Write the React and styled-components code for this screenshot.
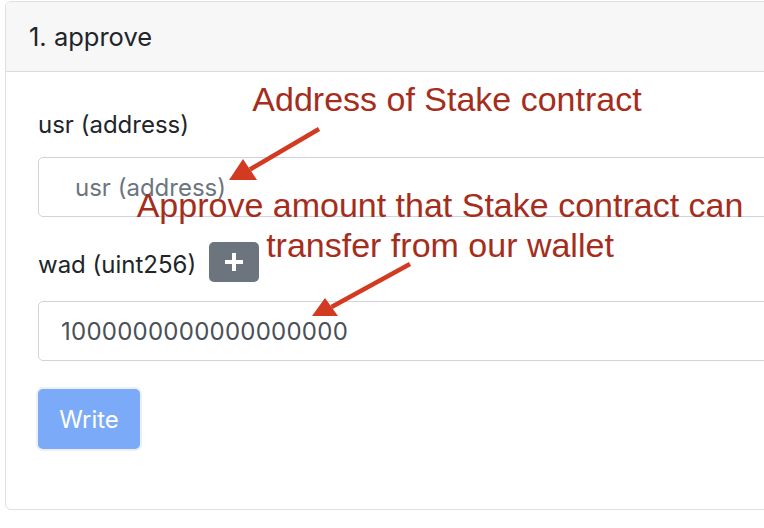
import React from 'react';
import styled, { createGlobalStyle } from 'styled-components';

const GlobalStyle = createGlobalStyle`
  html, body {
    margin: 0;
    background: #fff;
    overflow: hidden;
  }
`;

const Page = styled.div`
  position: relative;
  width: 764px;
  height: 528px;
  padding: 1px 0 0 5px;
  box-sizing: border-box;
  font-family: Inter, 'Liberation Sans', sans-serif;
`;

const Card = styled.div`
  width: 1000px;
  border: 1px solid #dfdfdf;
  border-radius: 6px;
  overflow: hidden;
`;

const CardHeader = styled.div`
  height: 69px;
  display: flex;
  align-items: center;
  padding: 0 23px;
  background: #f7f7f8;
  border-bottom: 1px solid #dcdcdc;
  font-size: 25.5px;
  color: #212529;
`;

const CardBody = styled.div`
  padding: 34px 32px 60px;
`;

const Label = styled.div`
  display: flex;
  align-items: center;
  gap: 13px;
  height: ${p => p.$h || 36}px;
  font-size: 24px;
  color: #212529;
`;

const Field = styled.input`
  display: block;
  box-sizing: border-box;
  width: 100%;
  height: 60px;
  margin: ${p => p.$mt}px 0 0;
  padding: 0 0 0 ${p => p.$indent}px;
  border: 1px solid #ced4da;
  border-radius: 5px;
  font-family: Inter, 'Liberation Sans', sans-serif;
  font-size: 24px;
  letter-spacing: ${p => p.$ls || 0}px;
  color: #495057;
  background: #fff;
  outline: none;

  &::placeholder {
    color: #6c757d;
  }
`;

const PlusButton = styled.button`
  width: 50px;
  height: 40px;
  display: flex;
  align-items: center;
  justify-content: center;
  border: none;
  border-radius: 5px;
  background: #6c757d;
  padding: 0;
  margin-top: -4px;
`;

const WriteButton = styled.button`
  display: block;
  margin-top: 28px;
  width: 102px;
  height: 60px;
  border: none;
  border-radius: 5px;
  background: #7aaaf8;
  box-shadow: 0 0 0 2px #eceff3;
  color: #fff;
  font-family: Inter, 'Liberation Sans', sans-serif;
  font-size: 24px;
`;

const Note = styled.div`
  position: absolute;
  top: ${p => p.$top}px;
  left: ${p => p.$left}px;
  transform: translateX(-50%);
  white-space: nowrap;
  text-align: center;
  font-family: 'Liberation Sans', Arial, sans-serif;
  font-size: 34px;
  line-height: 40px;
  color: #a52d1c;
`;

const Arrows = styled.svg`
  position: absolute;
  left: 0;
  top: 0;
  pointer-events: none;
`;

const Arrow = ({ from, tip, wings }) => (
  <>
    <line x1={from[0]} y1={from[1]} x2={(wings[0][0] + wings[1][0]) / 2} y2={(wings[0][1] + wings[1][1]) / 2} stroke="#d23b21" strokeWidth="4.5" />
    <polygon points={`${tip[0]},${tip[1]} ${wings[0][0]},${wings[0][1]} ${wings[1][0]},${wings[1][1]}`} fill="#d23b21" />
  </>
);

const App = () => {
  return (
    <>
      <GlobalStyle />
      <Page>
        <Card>
          <CardHeader>1. approve</CardHeader>
          <CardBody>
            <Label>usr (address)</Label>
            <Field $mt={15} $indent={36} placeholder="usr (address)" />
            <Label $h={40} style={{ marginTop: 27 }}>
              wad (uint256)
              <PlusButton>
                <svg width="18" height="18" viewBox="0 0 18 18">
                  <rect x="7" y="0" width="4" height="18" fill="#fff" />
                  <rect x="0" y="7" width="18" height="4" fill="#fff" />
                </svg>
              </PlusButton>
            </Label>
            <Field $mt={17} $indent={22} $ls={0.25} defaultValue="1000000000000000000" readOnly />
            <WriteButton>Write</WriteButton>
          </CardBody>
        </Card>

        <Note $top={79} $left={447}>Address of Stake contract</Note>
        <Note $top={185} $left={440}>
          Approve amount that Stake contract can
          <br />
          transfer from our wallet
        </Note>

        <Arrows width="764" height="528">
          <Arrow from={[319, 129]} tip={[229, 180]} wings={[[243, 159], [257, 180]]} />
          <Arrow from={[410, 264]} tip={[312, 316]} wings={[[325, 298], [338, 316]]} />
        </Arrows>
      </Page>
    </>
  );
};

export default App;
